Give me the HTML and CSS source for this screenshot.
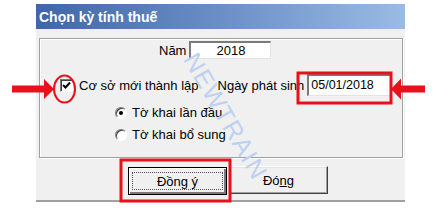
FILE: index.html
```html
<!DOCTYPE html>
<html>
<head>
<meta charset="utf-8">
<link rel="stylesheet" href="styles.css">
</head>
<body>
<div class="page">
  <div class="dialog">
    <div class="titlebar">Chọn kỳ tính thuế</div>
    <div class="content">
      <div class="group">
        <div class="row-year">
          <span class="lbl">Năm</span>
          <span class="field field-year">2018</span>
        </div>
        <div class="row-est">
          <span class="check">
            <svg width="9" height="9" viewBox="0 0 9 9"><path d="M1 4 L3.5 6.5 L8 1.5" fill="none" stroke="#000" stroke-width="2"/></svg>
          </span>
          <span class="lbl est-lbl">Cơ sở mới thành lập</span>
          <span class="lbl ngay-lbl">Ngày phát sinh</span>
          <span class="field field-date">05/01/2018</span>
        </div>
        <div class="row-radio first">
          <span class="radio on"></span>
          <span class="lbl">Tờ khai lần đầu</span>
        </div>
        <div class="row-radio">
          <span class="radio"></span>
          <span class="lbl">Tờ khai bổ sung</span>
        </div>
      </div>
      <div class="buttons">
        <button class="btn default"><span class="focus"><span class="cap">Đồn<u>g</u> ý</span></span></button>
        <button class="btn"><span class="cap">Đó<u>n</u>g</span></button>
      </div>
    </div>
  </div>

  <div class="watermark">NEWTRAIN</div>

  <svg class="annot" width="443" height="219" viewBox="0 0 443 219">
    <ellipse cx="64.5" cy="89" rx="10.5" ry="13.5" fill="none" stroke="#e8101a" stroke-width="2"/>
    <path d="M12 85.5 H44 V79 L54 89 L44 99 V92.5 H12 Z" fill="#e8101a"/>
    <path d="M425 85.5 H401 V78.5 L391 89 L401 99.5 V92.5 H425 Z" fill="#e8101a"/>
    <rect x="298" y="73" width="93" height="30" fill="none" stroke="#e8101a" stroke-width="3"/>
    <rect x="121" y="160" width="109" height="41" fill="none" stroke="#e8101a" stroke-width="3"/>
  </svg>
</div>
</body>
</html>
```
FILE: styles.css
```css
html, body {
  margin: 0;
  padding: 0;
  background: #ffffff;
}
.page {
  position: relative;
  width: 443px;
  height: 219px;
  overflow: hidden;
  font-family: "Liberation Sans", Arial, sans-serif;
  font-size: 13px;
  color: #000;
}
.dialog {
  margin: 4px 0 0 36px;
  width: 369px;
  height: 198px;
  display: flex;
  flex-direction: column;
  background: #f0f0f0;
  box-sizing: border-box;
  border-bottom: 2px solid #a0a0a0;
}
.titlebar {
  height: 25px;
  flex: none;
  box-sizing: border-box;
  padding: 5px 0 0 3px;
  background: linear-gradient(to right, #3f66a8 0%, #6a8fc6 50%, #99bbe4 100%);
  color: #fff;
  font-weight: bold;
  font-size: 14px;
  line-height: 16px;
}
.content {
  flex: 1;
  padding: 9px 2px 0 3px;
  display: flex;
  flex-direction: column;
}
.group {
  height: 120px;
  width: 364px;
  box-sizing: border-box;
  border: 1px solid #a0a0a0;
  box-shadow: 1px 1px 0 #fff, inset 1px 1px 0 #fff;
  display: flex;
  flex-direction: column;
}
.lbl {
  line-height: 15px;
  white-space: nowrap;
}
.field {
  background: #fff;
  box-sizing: border-box;
  border-top: 2px solid #7a7a7a;
  border-left: 2px solid #7a7a7a;
  border-right: 1px solid #e3e3e3;
  border-bottom: 1px solid #e3e3e3;
}
.row-year {
  display: flex;
  align-items: center;
  margin: 2px 0 0 119px;
  gap: 3px;
}
.field-year {
  width: 82px;
  height: 18px;
  text-align: center;
  line-height: 15px;
}
.row-est {
  display: flex;
  align-items: center;
  margin: 15px 0 0 20px;
}
.check {
  width: 13px;
  height: 13px;
  box-sizing: border-box;
  background: #fff;
  border-top: 1px solid #7a7a7a;
  border-left: 1px solid #7a7a7a;
  border-right: 1px solid #fff;
  border-bottom: 1px solid #fff;
  box-shadow: inset 1px 1px 0 #404040;
  display: flex;
  align-items: center;
  justify-content: center;
}
.est-lbl {
  margin-left: 6px;
}
.ngay-lbl {
  margin-left: 19px;
}
.field-date {
  margin-left: 3px;
  width: 84px;
  height: 22px;
  padding-left: 2px;
  font-size: 12.5px;
  line-height: 19px;
}
.row-radio {
  display: flex;
  align-items: center;
  margin: 7px 0 0 75px;
  gap: 5px;
}
.row-radio.first {
  margin-top: 9px;
}
.radio {
  width: 12px;
  height: 12px;
  box-sizing: border-box;
  border-radius: 50%;
  background: #fff;
  border: 1px solid;
  border-color: #7a7a7a #fff #fff #7a7a7a;
  box-shadow: inset 1px 1px 0 #404040;
  position: relative;
}
.radio.on::after {
  content: "";
  position: absolute;
  left: 3px;
  top: 3px;
  width: 4px;
  height: 4px;
  border-radius: 50%;
  background: #000;
}
.buttons {
  display: flex;
  gap: 2px;
  margin: 8px 0 0 89px;
  align-items: flex-start;
}
.btn {
  width: 99px;
  height: 28px;
  box-sizing: border-box;
  font-family: "Liberation Sans", Arial, sans-serif;
  font-size: 13px;
  background: #f0f0f0;
  color: #000;
  border: 1px solid;
  border-color: #fff #404040 #404040 #fff;
  box-shadow: inset -1px -1px 0 #a0a0a0, inset 1px 1px 0 #e3e3e3;
  padding: 0;
  margin: 0;
  display: flex;
  align-items: center;
  justify-content: center;
}
.btn.default {
  margin-top: 1px;
  border: 1px solid #000;
  box-shadow: inset 1px 1px 0 #fff, inset -2px -2px 0 #7a7a7a;
}
.btn.default .focus {
  width: 91px;
  height: 18px;
  border: 1px dotted #505050;
  box-sizing: border-box;
  display: flex;
  align-items: center;
  justify-content: center;
}
.cap {
  white-space: pre;
}
.btn u {
  text-decoration: underline;
}
.watermark {
  position: absolute;
  left: 138px;
  top: 101px;
  width: 176px;
  text-align: center;
  transform: rotate(60deg);
  color: #bdd1f1;
  font-size: 25px;
  line-height: 30px;
  letter-spacing: 1px;
  font-family: "Liberation Sans", Arial, sans-serif;
}
.annot {
  position: absolute;
  left: 0;
  top: 0;
}
```
